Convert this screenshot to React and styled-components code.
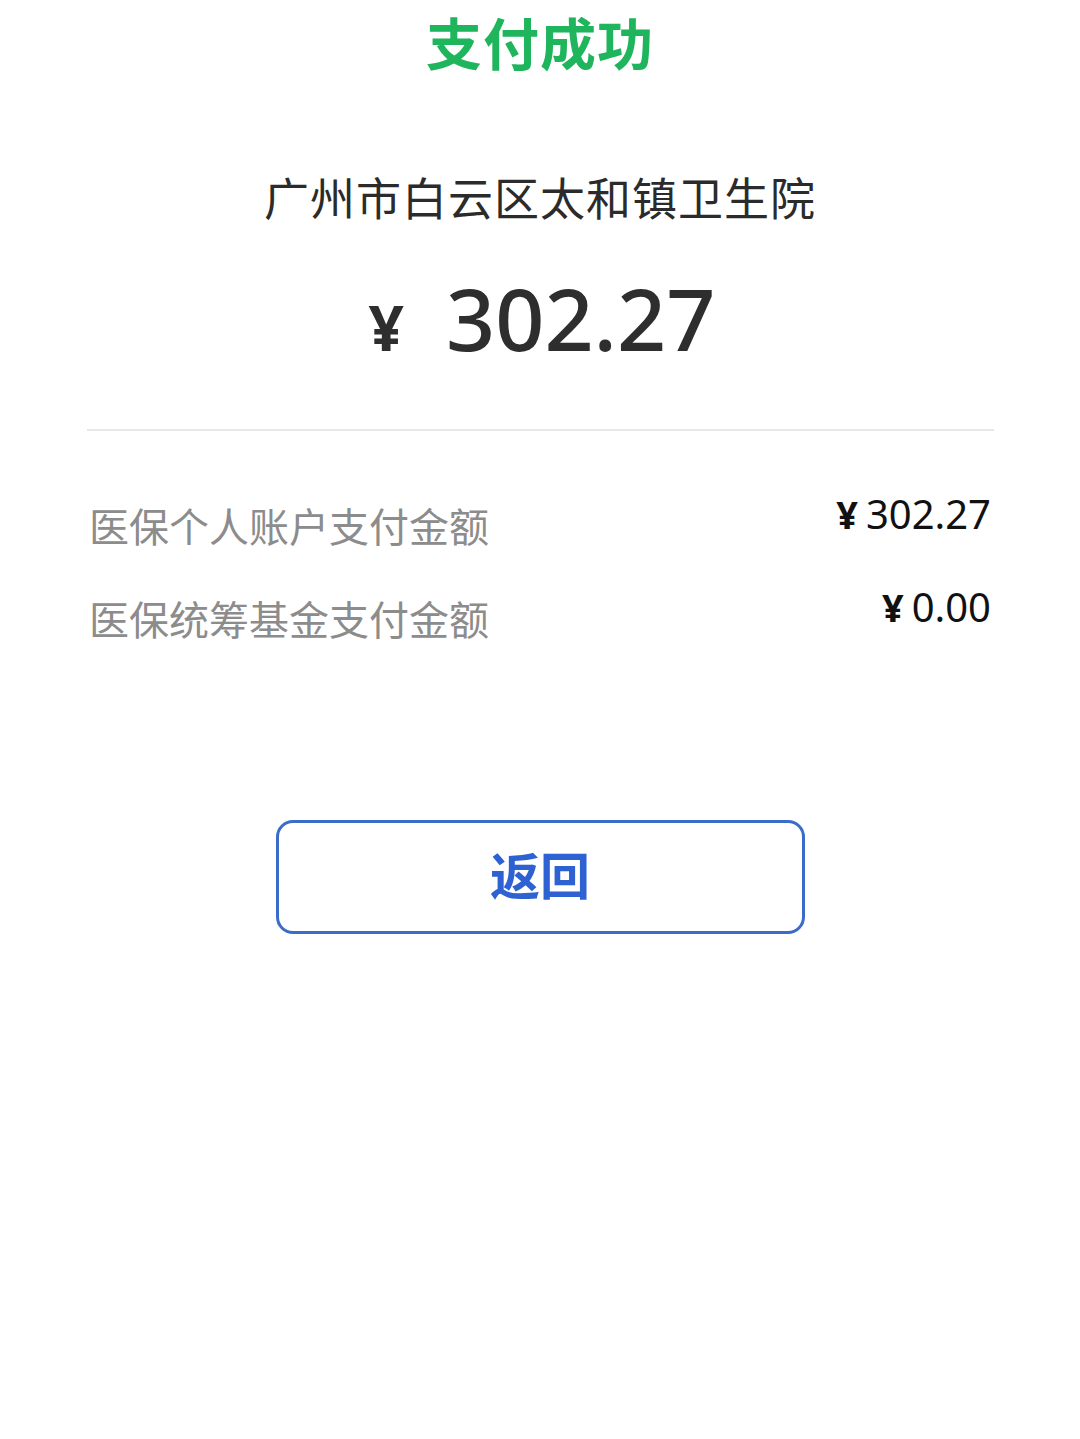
import React from "react";
import styled, { createGlobalStyle } from "styled-components";

const GlobalStyle = createGlobalStyle`
  html, body { margin: 0; padding: 0; background: #ffffff; }
  body { font-family: "Noto Sans", "Noto Sans CJK SC", sans-serif; }
`;

const Page = styled.div`
  width: 1080px;
  min-height: 1439px;
  background: #fff;
  display: flex;
  flex-direction: column;
  align-items: center;
`;

const Title = styled.h1`
  margin: 0;
  font-family: "Noto Sans CJK SC", sans-serif;
  font-size: 56px;
  font-weight: 700;
  line-height: 82px;
  color: #1fb55d;
  letter-spacing: 1px;
`;

const Merchant = styled.div`
  margin-top: 83px;
  font-family: "Noto Sans CJK SC", sans-serif;
  font-size: 45px;
  line-height: 64px;
  letter-spacing: 1px;
  color: #2b2b2b;
`;

const AmountRow = styled.div`
  margin-top: 36px;
  padding-left: 4px;
  display: flex;
  align-items: baseline;
  gap: 42px;
  color: #2e2e2e;
`;

const Yen = styled.span`
  font-family: "Noto Sans", "Noto Sans CJK SC", sans-serif;
  font-size: 62px;
  font-weight: 700;
`;

const BigAmount = styled.span`
  font-family: "Noto Sans", sans-serif;
  font-size: 86px;
  font-weight: 500;
  line-height: 106px;
`;

const Divider = styled.div`
  margin-top: 58px;
  width: 907px;
  height: 2px;
  background: #e8e8e8;
`;

const Details = styled.div`
  width: 902px;
  margin-top: 60px;
  display: flex;
  flex-direction: column;
  gap: 31px;
`;

const DetailRow = styled.div`
  display: flex;
  justify-content: space-between;
  align-items: flex-start;
`;

const Label = styled.span`
  font-family: "Noto Sans CJK SC", sans-serif;
  font-size: 40px;
  line-height: 56px;
  padding-top: 6px;
  color: #8c8c8c;
`;

const Value = styled.span`
  display: flex;
  align-items: baseline;
  gap: 8px;
  font-family: "Noto Sans", "Noto Sans CJK SC", sans-serif;
  font-size: 40px;
  line-height: 50px;
  color: #111;
  margin-top: -2px;
`;

const ValueYen = styled.span`
  font-weight: 700;
  font-size: 38px;
`;

const ReturnButton = styled.button`
  margin-top: 174px;
  width: 529px;
  height: 114px;
  border: 3px solid #3b6cc9;
  border-radius: 17px;
  background: #fff;
  color: #2e62d2;
  font-family: "Noto Sans CJK SC", sans-serif;
  font-size: 50px;
  font-weight: 700;
  line-height: 1;
  padding: 0 0 8px 0;
  display: flex;
  align-items: center;
  justify-content: center;
  cursor: pointer;
`;

const rows = [
  { label: "医保个人账户支付金额", value: "302.27" },
  { label: "医保统筹基金支付金额", value: "0.00" },
];

export default function App() {
  return (
    <>
      <GlobalStyle />
      <Page>
        <Title>支付成功</Title>
        <Merchant>广州市白云区太和镇卫生院</Merchant>
        <AmountRow>
          <Yen>¥</Yen>
          <BigAmount>302.27</BigAmount>
        </AmountRow>
        <Divider />
        <Details>
          {rows.map((r) => (
            <DetailRow key={r.label}>
              <Label>{r.label}</Label>
              <Value>
                <ValueYen>¥</ValueYen>
                {r.value}
              </Value>
            </DetailRow>
          ))}
        </Details>
        <ReturnButton>返回</ReturnButton>
      </Page>
    </>
  );
}
